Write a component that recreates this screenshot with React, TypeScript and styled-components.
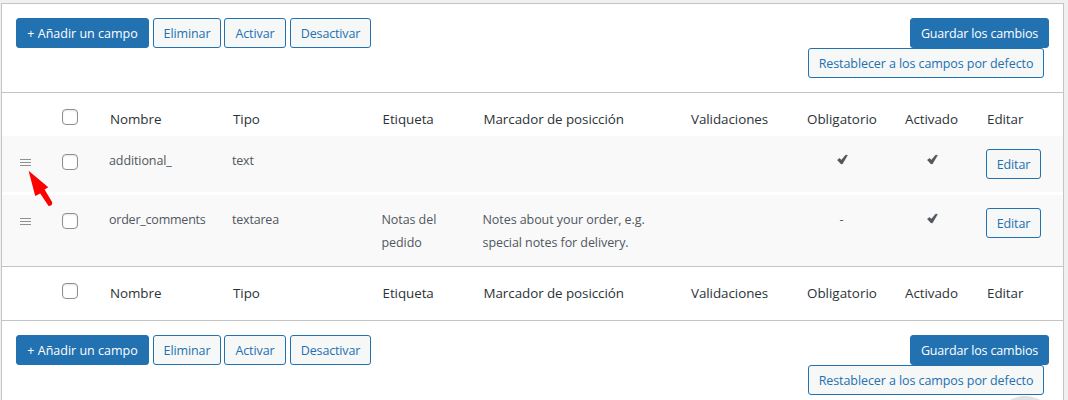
import React from "react";
import styled, { createGlobalStyle } from "styled-components";

const GlobalStyle = createGlobalStyle`
  * { box-sizing: border-box; }
  html, body { margin: 0; height: 400px; overflow: hidden; background: #f0f0f1; }
  body { font-family: "Open Sans", "Noto Sans", sans-serif; font-size: 12.5px; color: #50575e; }
`;

const Page = styled.main`
  height: 400px;
  overflow: hidden;
  padding: 3px 4px 0 1px;
  position: relative;
`;

const Panel = styled.section`
  height: 420px;
  background: #fff;
  border: 1px solid #c3c4c7;
`;

const Toolbar = styled.div`
  display: flex;
  justify-content: space-between;
  align-items: flex-start;
  height: 88px;
  padding: 14px 14px 0;
`;

const ButtonRow = styled.div`
  display: flex;
`;

const ButtonStack = styled.div`
  display: flex;
  flex-direction: column;
  align-items: flex-end;
`;

const Button = styled.button<{ $w: number; $primary?: boolean; $end?: number; $track?: number }>`
  flex: none;
  width: ${(p) => p.$w}px;
  height: 30px;
  margin: 0 ${(p) => p.$end ?? 0}px 0 0;
  padding: 1px 0 0;
  border: 1px solid #2271b1;
  border-radius: 3px;
  background: ${(p) => (p.$primary ? "#2271b1" : "#f6f7f7")};
  color: ${(p) => (p.$primary ? "#fff" : "#2271b1")};
  font: inherit;
  line-height: 27px;
  letter-spacing: ${(p) => p.$track ?? -0.08}px;
  text-align: center;
  white-space: nowrap;
`;

const columns = "60px 47px 123px 149.5px 101px 208.5px 105px 108px 82px 1fr";

const HeadRow = styled.div<{ $foot?: boolean }>`
  display: grid;
  grid-template-columns: ${columns};
  height: ${(p) => (p.$foot ? 55 : 44)}px;
  padding-top: 16px;
  border: solid #c3c4c7;
  border-width: ${(p) => (p.$foot ? "1px 0" : "1px 0 0")};
`;

const HeadCell = styled.div<{ $shift?: number; $track?: number }>`
  padding: 0 0 0 ${(p) => p.$shift ?? 1}px;
  font-size: 13.4px;
  line-height: 20px;
  letter-spacing: ${(p) => p.$track ?? -0.06}px;
  color: #2c3338;
  white-space: nowrap;
`;

const BodyRow = styled.div<{ $h: number }>`
  display: grid;
  grid-template-columns: ${columns};
  height: ${(p) => p.$h}px;
  background: #f9f9f9;
  & + & { margin-top: 3px; }
`;

const Cell = styled.div<{ $track?: number; $indent?: number }>`
  padding-top: 13px;
  padding-left: ${(p) => p.$indent ?? 0}px;
  line-height: 23px;
  letter-spacing: ${(p) => p.$track ?? -0.07}px;
  white-space: pre-line;
`;

const Handle = styled.div`
  padding: 22px 0 0 18px;
  line-height: 0;
`;

const CheckWrap = styled.div<{ $top?: number }>`
  padding-top: ${(p) => p.$top ?? 0}px;
`;

const Checkbox = styled.input.attrs({ type: "checkbox" })`
  appearance: none;
  display: block;
  width: 16px;
  height: 16px;
  margin: 0;
  border: 1px solid #8c8f94;
  border-radius: 4px;
  background: #fff;
  box-shadow: inset 0 1px 2px rgba(0, 0, 0, 0.1);
`;

const EditCell = styled.div`
  padding: 13px 0 0;
`;

const Pointer = styled.svg`
  position: absolute;
  left: 26px;
  top: 168px;
`;

const Bubble = styled.div`
  position: absolute;
  left: 995px;
  top: 396px;
  width: 60px;
  height: 60px;
  border-radius: 50%;
  background: #e1e1e1;
`;

const Grip = () => (
  <svg width="12" height="10" viewBox="0 0 12 10">
    <path d="M0 1.5h11M0 4.5h11M0 7.5h11" stroke="#909090" strokeWidth="1" />
  </svg>
);

const Tick = () => (
  <svg width="12" height="11" viewBox="0 0 12 11">
    <path d="M.3 5.9L2.6 4.3 4.4 6.1 8.6 1 10.6 1.2 5.4 10 4 10z" fill="#50575e" stroke="#50575e" strokeWidth=".3" />
  </svg>
);

const Actions = () => (
  <Toolbar>
    <ButtonRow>
      <Button $primary $w={133} $end={4} $track={0}>+ Añadir un campo</Button>
      <Button $w={68} $end={3} $track={-0.1}>Eliminar</Button>
      <Button $w={62} $end={4}>Activar</Button>
      <Button $w={81} $track={-0.15}>Desactivar</Button>
    </ButtonRow>
    <ButtonStack>
      <Button $primary $w={139} $track={-0.17}>Guardar los cambios</Button>
      <Button $w={236} $end={5}>Restablecer a los campos por defecto</Button>
    </ButtonStack>
  </Toolbar>
);

const Headings = ({ foot }: { foot?: boolean }) => (
  <HeadRow $foot={foot}>
    <span />
    <CheckWrap><Checkbox /></CheckWrap>
    <HeadCell>Nombre</HeadCell>
    <HeadCell>Tipo</HeadCell>
    <HeadCell>Etiqueta</HeadCell>
    <HeadCell>Marcador de posicción</HeadCell>
    <HeadCell $shift={0}>Validaciones</HeadCell>
    <HeadCell $shift={11} $track={0}>Obligatorio</HeadCell>
    <HeadCell $shift={1}>Activado</HeadCell>
    <HeadCell>Editar</HeadCell>
  </HeadRow>
);

type Field = {
  name: string;
  type: string;
  label?: string;
  placeholder?: string;
  required: boolean;
  enabled: boolean;
  height: number;
};

const fields: Field[] = [
  { name: "additional_", type: "text", required: true, enabled: true, height: 56 },
  {
    name: "order_comments",
    type: "textarea",
    label: "Notas del\npedido",
    placeholder: "Notes about your order, e.g.\nspecial notes for delivery.",
    required: false,
    enabled: true,
    height: 71,
  },
];

const App = () => (
  <Page>
    <GlobalStyle />
    <Panel>
      <Actions />
      <Headings />
      {fields.map((f) => (
        <BodyRow key={f.name} $h={f.height}>
          <Handle><Grip /></Handle>
          <CheckWrap $top={18}><Checkbox /></CheckWrap>
          <Cell $track={f.name.length < 12 ? -0.1 : -0.22}>{f.name}</Cell>
          <Cell $track={-0.2}>{f.type}</Cell>
          <Cell>{f.label}</Cell>
          <Cell>{f.placeholder}</Cell>
          <Cell />
          <Cell $indent={f.required ? 41 : 43.5}>{f.required ? <Tick /> : "-"}</Cell>
          <Cell $indent={23}>{f.enabled ? <Tick /> : "-"}</Cell>
          <EditCell><Button $w={55} $track={-0.15}>Editar</Button></EditCell>
        </BodyRow>
      ))}
      <Headings foot />
      <Actions />
    </Panel>
    <Pointer width="30" height="42" viewBox="0 0 30 42">
      <path d="M2.6 2.8L22.3 19.3 18.6 21.6 26.2 34.2Q26.6 38 22.6 38L14.2 25.6 9.2 28z" fill="#f00" />
    </Pointer>
    <Bubble />
  </Page>
);

export default App;
